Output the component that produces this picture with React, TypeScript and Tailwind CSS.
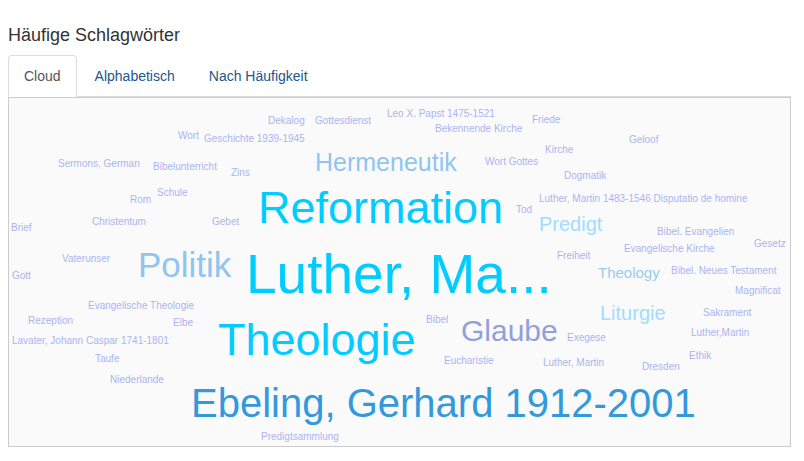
type Size = 1 | 2 | 3 | 4 | 5 | 6 | 7 | 8 | 10;

type Word = {
  text: string;
  size: Size;
  /** Left edge and baseline inside the cloud canvas. */
  x: number;
  y: number;
};

const sizes: Record<Size, { ascent: number; className: string }> = {
  1: { ascent: 9, className: "text-[10px] text-[#aab5f0]" },
  2: { ascent: 14, className: "text-[15px] text-[#99ccee]" },
  3: { ascent: 18, className: "text-[20px] text-[#a0ddff]" },
  4: { ascent: 23, className: "text-[25px] text-[#90c5f0]" },
  5: { ascent: 27, className: "text-[30px] text-[#90a0dd]" },
  6: { ascent: 32, className: "text-[35px] text-[#90c5f0]" },
  7: { ascent: 36, className: "text-[40px] text-[#3399dd]" },
  8: { ascent: 41, className: "text-[45px] text-[#00ccff]" },
  10: { ascent: 50, className: "text-[55px] text-[#00ccff]" },
};

const words: Word[] = [
  { text: "Luther, Ma...", size: 10, x: 237, y: 194 },
  { text: "Reformation", size: 8, x: 249, y: 125 },
  { text: "Theologie", size: 8, x: 209, y: 257 },
  { text: "Ebeling, Gerhard 1912-2001", size: 7, x: 182, y: 319 },
  { text: "Politik", size: 6, x: 129, y: 179 },
  { text: "Glaube", size: 5, x: 452, y: 243 },
  { text: "Hermeneutik", size: 4, x: 306, y: 73 },
  { text: "Predigt", size: 3, x: 530, y: 133 },
  { text: "Liturgie", size: 3, x: 591, y: 222 },
  { text: "Theology", size: 2, x: 589, y: 180 },
  { text: "Dekalog", size: 1, x: 259, y: 26 },
  { text: "Gottesdienst", size: 1, x: 306, y: 26 },
  { text: "Leo X. Papst 1475-1521", size: 1, x: 378, y: 19 },
  { text: "Bekennende Kirche", size: 1, x: 426, y: 34 },
  { text: "Friede", size: 1, x: 523, y: 25 },
  { text: "Geloof", size: 1, x: 620, y: 45 },
  { text: "Kirche", size: 1, x: 536, y: 55 },
  { text: "Wort", size: 1, x: 169, y: 41 },
  { text: "Geschichte 1939-1945", size: 1, x: 195, y: 44 },
  { text: "Wort Gottes", size: 1, x: 476, y: 67 },
  { text: "Dogmatik", size: 1, x: 555, y: 81 },
  { text: "Sermons, German", size: 1, x: 49, y: 69 },
  { text: "Bibelunterricht", size: 1, x: 144, y: 72 },
  { text: "Zins", size: 1, x: 222, y: 78 },
  { text: "Schule", size: 1, x: 148, y: 98 },
  { text: "Rom", size: 1, x: 121, y: 105 },
  { text: "Christentum", size: 1, x: 83, y: 127 },
  { text: "Gebet", size: 1, x: 203, y: 127 },
  { text: "Brief", size: 1, x: 2, y: 133 },
  { text: "Vaterunser", size: 1, x: 53, y: 164 },
  { text: "Gott", size: 1, x: 3, y: 181 },
  { text: "Luther, Martin 1483-1546 Disputatio de homine", size: 1, x: 530, y: 104 },
  { text: "Tod", size: 1, x: 507, y: 115 },
  { text: "Bibel. Evangelien", size: 1, x: 648, y: 137 },
  { text: "Gesetz", size: 1, x: 745, y: 149 },
  { text: "Evangelische Kirche", size: 1, x: 615, y: 154 },
  { text: "Freiheit", size: 1, x: 548, y: 161 },
  { text: "Bibel. Neues Testament", size: 1, x: 662, y: 176 },
  { text: "Magnificat", size: 1, x: 726, y: 196 },
  { text: "Sakrament", size: 1, x: 694, y: 218 },
  { text: "Luther,Martin", size: 1, x: 682, y: 238 },
  { text: "Exegese", size: 1, x: 558, y: 243 },
  { text: "Ethik", size: 1, x: 680, y: 261 },
  { text: "Luther, Martin", size: 1, x: 534, y: 268 },
  { text: "Dresden", size: 1, x: 633, y: 272 },
  { text: "Bibel", size: 1, x: 417, y: 225 },
  { text: "Eucharistie", size: 1, x: 435, y: 266 },
  { text: "Evangelische Theologie", size: 1, x: 79, y: 211 },
  { text: "Rezeption", size: 1, x: 19, y: 226 },
  { text: "Elbe", size: 1, x: 164, y: 228 },
  { text: "Lavater, Johann Caspar 1741-1801", size: 1, x: 3, y: 246 },
  { text: "Taufe", size: 1, x: 86, y: 264 },
  { text: "Niederlande", size: 1, x: 101, y: 285 },
  { text: "Predigtsammlung", size: 1, x: 252, y: 342 },
];

const tabs = [
  { label: "Cloud", href: "#cloud", active: true },
  { label: "Alphabetisch", href: "#alphabetisch", active: false },
  { label: "Nach Häufigkeit", href: "#haeufigkeit", active: false },
];

function Tabs() {
  return (
    <nav className="mt-[10px] border-b border-[#dddddd]">
      <ul className="-mb-px flex gap-[2px] text-[14px] leading-[20px]">
        {tabs.map((tab) => (
          <li key={tab.href}>
            <a
              href={tab.href}
              aria-current={tab.active ? "page" : undefined}
              className={
                tab.active
                  ? "block rounded-t-sm border border-[#dddddd] border-b-white bg-white px-[15px] py-[10px] text-[#555555]"
                  : "block rounded-t-sm border border-transparent px-[15px] py-[10px] text-[#23568c] hover:bg-[#eeeeee]"
              }
            >
              {tab.label}
            </a>
          </li>
        ))}
      </ul>
    </nav>
  );
}

function WordCloud() {
  return (
    <ul id="cloud" className="relative h-[350px] overflow-hidden border border-[#cccccc] bg-[#fafafa]">
      {words.map((word) => {
        const { ascent, className } = sizes[word.size];
        return (
          <li
            key={word.text}
            className={`absolute whitespace-nowrap leading-[normal] ${className}`}
            style={{ left: word.x, top: word.y - ascent }}
          >
            <a href="#cloud" className="block hover:underline">
              {word.text}
            </a>
          </li>
        );
      })}
    </ul>
  );
}

export default function App() {
  return (
    <main className="bg-white pt-[25px] pr-[13px] pb-[14px] pl-2 font-['Liberation_Sans',Arial,sans-serif] text-[#333333]">
      <h4 className="text-[18px] leading-[20px]">Häufige Schlagwörter</h4>
      <Tabs />
      <WordCloud />
    </main>
  );
}
